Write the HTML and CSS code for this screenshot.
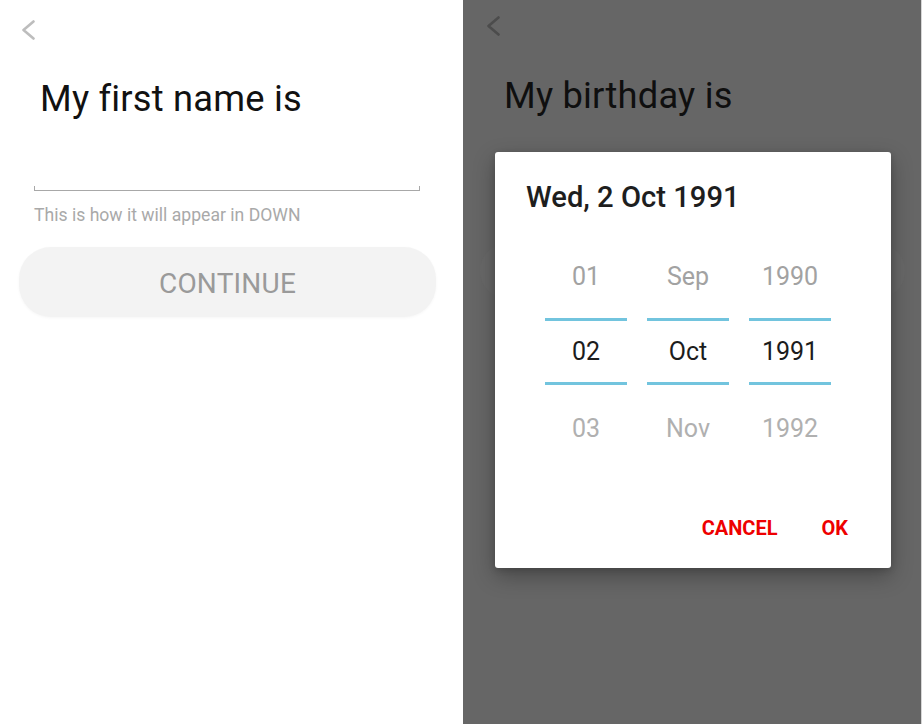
FILE: index.html
```html
<!DOCTYPE html>
<html lang="en">
<head>
<meta charset="utf-8">
<title>Sign up</title>
<link rel="stylesheet" href="styles.css">
</head>
<body>
<div class="app">
  <section class="screen screen-name">
    <svg class="back" width="14" height="20" viewBox="0 0 14 20"><polyline points="12.5,1.5 2.5,10 12.5,18.5" fill="none" stroke="#bdbdbd" stroke-width="2.6" stroke-linecap="round" stroke-linejoin="round"/></svg>
    <h1 class="title">My first name is</h1>
    <div class="field"></div>
    <p class="helper">This is how it will appear in DOWN</p>
    <button class="cta">CONTINUE</button>
  </section>

  <section class="screen screen-birthday">
    <svg class="back back-dim" width="14" height="20" viewBox="0 0 14 20"><polyline points="12.5,1.5 2.5,10 12.5,18.5" fill="none" stroke="#4c4c4c" stroke-width="2.6" stroke-linecap="round" stroke-linejoin="round"/></svg>
    <h1 class="title title-dim">My birthday is</h1>
    <div class="ghost-btn"></div>

    <div class="dialog">
      <div class="dialog-date">Wed, 2 Oct 1991</div>
      <div class="picker">
        <div class="col">
          <div class="cell cell-prev">01</div>
          <div class="rule"></div>
          <div class="cell cell-sel">02</div>
          <div class="rule"></div>
          <div class="cell cell-next">03</div>
        </div>
        <div class="col">
          <div class="cell cell-prev">Sep</div>
          <div class="rule"></div>
          <div class="cell cell-sel">Oct</div>
          <div class="rule"></div>
          <div class="cell cell-next">Nov</div>
        </div>
        <div class="col">
          <div class="cell cell-prev">1990</div>
          <div class="rule"></div>
          <div class="cell cell-sel">1991</div>
          <div class="rule"></div>
          <div class="cell cell-next">1992</div>
        </div>
      </div>
      <div class="actions">
        <button class="act">CANCEL</button>
        <button class="act">OK</button>
      </div>
    </div>
  </section>
  <div class="edge"></div>
</div>
</body>
</html>
```
FILE: styles.css
```css
* { box-sizing: border-box; }
html, body { margin: 0; padding: 0; }
body {
  font-family: Roboto, "Noto Sans", "Liberation Sans", sans-serif;
  background: #ffffff;
  width: 922px;
  height: 724px;
  overflow: hidden;
}
.app {
  display: flex;
  width: 922px;
  height: 724px;
}
.screen {
  display: flex;
  flex-direction: column;
  align-items: flex-start;
  height: 724px;
}
.screen-name {
  width: 463px;
  background: #ffffff;
  padding-top: 20px;
}
.screen-birthday {
  position: relative;
  width: 458px;
  background: #666666;
  padding-top: 16px;
}
.edge {
  width: 1px;
  height: 724px;
  background: #d6d6d6;
}
.back {
  display: block;
  margin-left: 21px;
}
.back-dim { margin-left: 23px; }

.title {
  margin: 39px 0 0 40px;
  font-size: 36.3px;
  line-height: 40px;
  font-weight: 400;
  letter-spacing: 0.2px;
  color: #111111;
}
.title-dim {
  margin: 40px 0 0 41px;
  color: #0f0f0f;
}
.field {
  margin: 31px 0 0 34px;
  width: 386px;
  height: 41px;
  border-bottom: 1px solid #a8a8a8;
  background:
    linear-gradient(#a8a8a8, #a8a8a8) left bottom / 1px 4px no-repeat,
    linear-gradient(#a8a8a8, #a8a8a8) right bottom / 1px 4px no-repeat;
}
.helper {
  margin: 14px 0 0 34px;
  font-size: 17.6px;
  line-height: 20px;
  color: #a9a9a9;
}
.cta {
  margin: 22px 0 0 19px;
  width: 417px;
  height: 70px;
  border: none;
  border-radius: 32px;
  background: #f3f3f3;
  box-shadow: 0 1px 3px rgba(0,0,0,0.04);
  font-family: inherit;
  font-size: 28px;
  line-height: 66px;
  padding: 4px 0 0 0;
  color: #9a9a9a;
  letter-spacing: 0.2px;
}
.ghost-btn {
  margin: 127px 0 0 17px;
  width: 425px;
  height: 56px;
  border-radius: 28px;
  background: #686868;
}

.dialog {
  position: absolute;
  left: 32px;
  top: 152px;
  width: 396px;
  height: 416px;
  background: #ffffff;
  border-radius: 3px;
  box-shadow: 0 8px 22px rgba(0,0,0,0.30), 0 2px 6px rgba(0,0,0,0.15);
  display: flex;
  flex-direction: column;
}
.dialog-date {
  margin: 28px 0 0 31px;
  font-size: 29.2px;
  line-height: 34px;
  font-weight: 500;
  color: #1e1e1e;
}
.picker {
  display: flex;
  gap: 20px;
  margin: 40px 0 0 50px;
}
.col {
  display: flex;
  flex-direction: column;
  width: 82px;
}
.cell {
  text-align: center;
  font-size: 25px;
}
.cell-prev {
  line-height: 46px;
  margin-bottom: 18px;
  color: #a2a2a2;
}
.cell-sel {
  line-height: 61px;
  color: #1c1c1c;
}
.cell-next {
  line-height: 46px;
  margin-top: 21px;
  color: #b0b0b0;
}
.rule {
  height: 3px;
  background: #72c4de;
}
.actions {
  display: flex;
  justify-content: flex-end;
  gap: 44px;
  margin-top: 64px;
  padding-right: 43px;
}
.act {
  border: none;
  background: none;
  padding: 0;
  font-family: inherit;
  font-size: 20px;
  line-height: 24px;
  font-weight: 700;
  color: #ee0000;
}
```
